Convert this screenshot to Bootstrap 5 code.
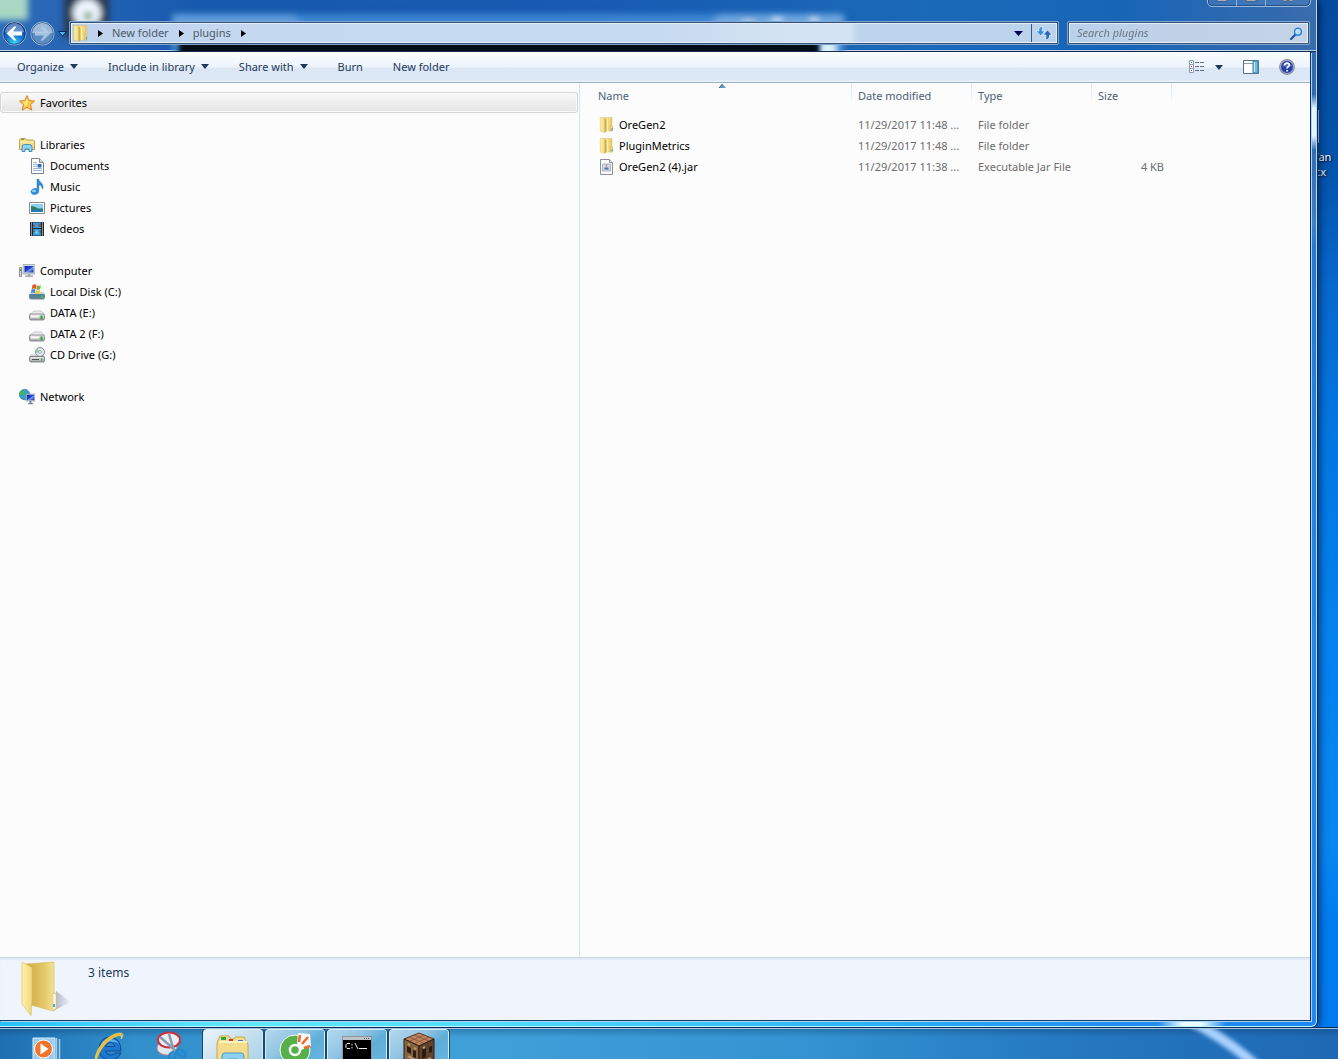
<!DOCTYPE html>
<html lang="en">
<head>
<meta charset="utf-8">
<meta name="viewport" content="width=device-width, initial-scale=1">
<title>plugins</title>
<link href="https://cdn.jsdelivr.net/npm/bootstrap@5.3.0/dist/css/bootstrap.min.css" rel="stylesheet">
<style>
  body { font-family: "Noto Sans", "Open Sans", sans-serif; font-size: 11px; line-height: 21px; color: #000; background: #0257b2; }
  button, input { font: inherit; }
  svg { display: block; flex: none; }
  a { color: inherit; text-decoration: none; }
  .plain-btn { background: none; border: 0; padding: 0; color: inherit; }
  .can-shrink { min-height: 0; }

  /* desktop */
  .desk { min-height: 0; padding-right: 20px; background: linear-gradient(180deg, #064ba0 0, #0453ab 16%, #0768cd 28%, #0377e2 42%, #0582f0 65%, #0a86f0 82%, #017cf0 90%, #017bef 100%); }
  .desk-file { left: calc(100% - 26px); top: 110px; width: 26px; height: 72px; color: #fff; line-height: 15px; text-shadow: 1px 1px 2px #000; overflow: hidden; padding-top: 39px; }
  .desk-file::before { content: ""; position: absolute; left: 5px; top: 0; width: 2px; height: 33px; background: #dcebf8; }

  /* window frame */
  .win { border-right: 1px solid #0b2f5c; border-bottom: 1px solid #07264f; border-radius: 0 0 7px 0; box-shadow: 1px 0 8px rgba(0,20,60,.8); position: relative; z-index: 1; }
  .frame { padding: 0 5px 5px 0; border-right: 1px solid #b5dcfa; border-bottom: 1px solid #c1f4ff; border-radius: 0 0 6px 0; min-height: 0;
    background:
      radial-gradient(ellipse 34px 8px at 1192px calc(100% - 2px), #e9ffff 30%, transparent),
      radial-gradient(ellipse 12px 28px at calc(100% - 2px) 122px, #e4f5ff 50%, transparent),
      linear-gradient(90deg, #27c0fd 0, #62e9ff 18%, #50dcff 38%, #2bb5fa 65%, #218cf0 85%, #1c88f0 100%) 0 100%/100% 8px no-repeat,
      linear-gradient(180deg, #386fb3 0, #2f66ad 12%, #3e7fc8 22%, #2779d2 24%, #2186e9 55%, #2089f2 100%); }
  .client { border-right: 1px solid #12305c; border-bottom: 1px solid #163b66; box-shadow: 1px 1px 0 #a5d4f5; background: #fcfcfc; min-height: 0; }

  /* glass header */
  .glass { height: 52px; margin-right: -5px; overflow: hidden; background: linear-gradient(90deg, #2f6cb8 0, #1759ae 15%, #175bb2 45%, #1b69b9 70%, #1765b7 85%, #3a6cad 100%); border-bottom: 1px solid #102b4d; box-shadow: inset 0 -1px 0 #bdd4ea; position: relative; }
  .glass-back { position: absolute; inset: 0; width: 100%; height: 100%; }
  .caption { position: absolute; right: 5px; top: -14px; height: 21px; width: 104px; border: 1px solid #9dbbdc; border-radius: 0 0 5px 5px; box-shadow: inset 0 0 0 1px #254f88; background: rgba(90,140,200,.35); overflow: hidden; }
  .caption button { display: flex; justify-content: center; align-items: end; border-right: 1px solid #8fb0d6; padding-bottom: 4px; width: 29px; }
  .caption button:last-child { border: 0; }
  .nav-line { position: relative; padding: 21px 6px 0 2px; }
  .nav-set { width: 67px; height: 25px; gap: 3px; }
  .glass-box { height: 24px; border: 1px solid rgba(145,180,220,.85); border-radius: 2px; padding: 1px; background: #33537a; min-width: 0; }
  .glass-in { border: 1px solid #e4eef8; background: linear-gradient(90deg, #bfd2ec 0, #c5d9f1 20%, #c6daf1 60%, #d5e4f2 74%, #d5e4f2 79%, #bdd4ec 80%, #bcd3ec 100%); min-width: 0; height: 20px; }
  .glass-in.search-in { background: linear-gradient(90deg, #bad1ea, #c5d3e6); }
  .address { color: #4c5a68; line-height: 18px; }
  .crumb-mark { margin: 0 9px 0 10px; }
  .crumb-first { margin-left: 8px; }
  .search-box { flex: 0 0 243px; }
  .search-box input { background: none; border: 0; outline: 0; font-style: italic; padding: 0 7px; min-width: 0; line-height: 16px; }
  .search-box input::placeholder { color: #6d7780; opacity: 1; }
  .go { width: 25px; border-left: 1px solid #37597f; }

  /* command bar */
  .cmdbar { height: 31px; padding: 0 15px 0 2px; color: #1e395b; background: linear-gradient(180deg, #fafdff 0, #ecf4fc 15px, #dce6f4 16px, #dde8f6 28px, #e9f1fb 29px); border-bottom: 1px solid #9db0cb; }
  .cmdbar .plain-btn { padding: 0 15px 1px; line-height: 28px; display: flex; align-items: center; gap: 6px; }

  /* tree */
  .tree { flex: 0 0 580px; border-right: 1px solid #d6e5f5; padding: 9px 1px 0 0; }
  .tree ul { list-style: none; margin: 0 0 21px; padding: 0; }
  .tree a { display: flex; align-items: center; gap: 5px; height: 21px; padding-left: 29px; }
  .tree a.top { padding-left: 19px; }
  .tree a.picked { border: 1px solid #d6d6d6; border-radius: 3px; padding-left: 18px; background: linear-gradient(#f9f9f9, #e4e4e4); box-shadow: inset 0 0 0 1px #fafafa; }

  /* list */
  .files { table-layout: fixed; width: 592px; border-collapse: separate; border-spacing: 0; color: #6d6d6d; }
  .files th { height: 31px; padding: 2px 6px 0; vertical-align: top; font-weight: 400; color: #4c607a; position: relative; background: linear-gradient(180deg, #d9e8f8, #e3effb 60%, #fcfcfc) 100% 0/1px 20px no-repeat; }
  .files td { height: 21px; padding: 0 6px; white-space: nowrap; }
  .files th:first-child { padding-left: 18px; }
  .files td:first-child { padding-left: 19px; color: #000; }
  .files td:last-child { padding-right: 8px; text-align: right; }
  .fname { display: flex; align-items: center; gap: 4px; }
  .sort-mark { position: absolute; left: 51%; top: 1px; }

  .details { height: 63px; background: #f0f4fc; border-top: 1px solid #c6d7e8; box-shadow: inset 0 2px 1px #e2eaf6; color: #1e395b; font-size: 12px; padding: 3px 0 0 19px; gap: 19px; line-height: 24px; }

  /* taskbar */
  .taskbar { height: 31px; border-top: 1px solid #a4c4e2; overflow: hidden; padding-left: 16px; position: relative; z-index: 2; box-shadow: 0 -1px 0 #0b2c54;
    background: linear-gradient(180deg, rgba(10,60,110,.35), transparent 8px),
      linear-gradient(90deg, #1d6fb2 0, #318fca 10%, #40a0d8 35%, #3493d2 60%, #2478c0 80%, #1f68b4 100%); }
  .taskbar .plain-btn { width: 62px; height: 40px; flex: none; display: flex; justify-content: center; padding-top: 2px; }
  .taskbar .running { width: 60px; margin: 0 1px; border: 1px solid #d5ecf9; border-radius: 3px; background: linear-gradient(140deg, #b5d8ec 0, #8fc4e2 38%, #5eaed9 60%, #6bb7df 100%); outline: 1px solid #17496f; }
  .taskbar .front { background: linear-gradient(140deg, #eaf4fa 0, #c9e1ef 45%, #a4d0e9 100%); }
  .beam { position: absolute; left: 1180px; top: 0; }
</style>
<script src="https://cdn.jsdelivr.net/npm/bootstrap@5.3.0/dist/js/bootstrap.bundle.min.js"></script>
</head>
<body class="vh-100 d-flex flex-column overflow-hidden">

<svg width="0" height="0" class="position-absolute" aria-hidden="true">
  <defs>
    <linearGradient id="gold" x1="0" x2="1"><stop offset="0" stop-color="#fdf3a9"/><stop offset="1" stop-color="#e8c864"/></linearGradient>
    <linearGradient id="goldIn" x1="0" x2="1"><stop offset="0" stop-color="#cfa743"/><stop offset=".6" stop-color="#e3c766"/><stop offset="1" stop-color="#f7e69a"/></linearGradient>
    <linearGradient id="goldFlap" x1="0" x2="1"><stop offset="0" stop-color="#fff3a6"/><stop offset="1" stop-color="#f0d780"/></linearGradient>
    <linearGradient id="screen" x1="0" y1="0" x2="1" y2="1"><stop offset="0" stop-color="#0a1fa8"/><stop offset=".5" stop-color="#2446d8"/><stop offset=".55" stop-color="#7fa2f2"/><stop offset="1" stop-color="#0c22b0"/></linearGradient>
    <linearGradient id="metal" x1="0" y1="0" x2="0" y2="1"><stop offset="0" stop-color="#f1f1f3"/><stop offset="1" stop-color="#9fa1a8"/></linearGradient>
    <radialGradient id="ball" cx=".5" cy=".95" r=".9"><stop offset="0" stop-color="#3fe0ff"/><stop offset=".45" stop-color="#1673d0"/><stop offset="1" stop-color="#0a3a94"/></radialGradient>
    <linearGradient id="lens" x1="0" y1="0" x2="1" y2="1"><stop offset="0" stop-color="#e6f5ff"/><stop offset="1" stop-color="#8fc2ee"/></linearGradient>
    <symbol id="i-folder" viewBox="0 0 16 16">
      <path d="M5 .5h8v13.500H5z" fill="url(#gold)" stroke="#dcc069" stroke-width=".5"/>
      <path d="M1.300.5h4.200l.5 15-4.700-1.500z" fill="url(#goldFlap)" stroke="#d9bd60" stroke-width=".5"/>
      <path d="M5.800 1l1.700 1.500V14l-1.700 1.500z" fill="#c09a3c" opacity=".75"/>
      <path d="M8 2h1v12H8z" fill="#fff3ae"/>
      <path d="M11.500 8.500l2 .5v5h-2z" fill="#f4e08e" stroke="#cfab4c" stroke-width=".5"/><path d="M12.500 11h1v2.500h-1z" fill="#3aa0e0"/>
    </symbol>
    <symbol id="i-drive" viewBox="0 0 16 16">
      <path d="M3 6.500L5 5h7l2 1.500 1.500 2h-15z" fill="#ededf0" stroke="#b0b0b5" stroke-width=".6"/>
      <rect x=".5" y="8" width="15" height="6" rx="1.500" fill="url(#metal)" stroke="#77797f" stroke-width=".8"/>
      <rect x="2" y="9.500" width="8" height="2" fill="#f7f7f8"/><rect x="11.500" y="9.500" width="2" height="3.500" fill="#2da52d"/>
    </symbol>
  </defs>
</svg>

<main class="desk flex-grow-1 position-relative d-flex flex-column">
  <div class="desk-file position-absolute">Van<br>&nbsp;cx</div>

  <div class="win can-shrink flex-grow-1 d-flex flex-column">
    <div class="frame flex-grow-1 d-flex flex-column">

      <header class="glass flex-shrink-0">
        <svg class="glass-back" aria-hidden="true">
          <defs>
            <filter id="soft" x="-20%" y="-50%" width="140%" height="200%"><feGaussianBlur stdDeviation="3"/></filter>
            <filter id="edge" x="-5%" y="-50%" width="110%" height="200%"><feGaussianBlur stdDeviation="2 0"/></filter>
          </defs>
          <g filter="url(#soft)">
            <rect x="-10" y="-10" width="38" height="30" fill="#a9d7c4"/>
            <rect x="64" y="-8" width="45" height="46" fill="#26384f"/>
            <ellipse cx="87" cy="13" rx="14" ry="14" fill="#eef6ff"/><circle cx="88" cy="16" r="4" fill="#5a8b55"/>
            <rect x="172" y="14" width="672" height="44" rx="4" fill="#4a93dc" opacity=".75"/>
            <path d="M172 14h120l30 30H172z" fill="#7fb4e8" opacity=".5"/>
            <path d="M720 14h124v30H690z" fill="#8fbbe6" opacity=".6"/>
            <ellipse cx="748" cy="22" rx="6" ry="2" fill="#d5e8f8"/><ellipse cx="777" cy="20" rx="6" ry="3" fill="#d5e8f8"/><ellipse cx="814" cy="20" rx="5" ry="3" fill="#d5e8f8"/>
            <rect x="820" y="42" width="16" height="14" fill="#dff5ff"/>
          </g>
          <rect x="179" y="44" width="640" height="8" fill="#050b12" filter="url(#edge)"/>
          <path d="M200 50h80M310 50h20M440 50h25M492 50h20" stroke="#0a2414" stroke-width="3" filter="url(#edge)"/>
        </svg>
        <div class="caption d-flex">
          <button class="plain-btn" aria-label="Minimize"><svg width="12" height="4"><path d="M1 0h10v3H1z" fill="#fff" stroke="#4a5b73"/></svg></button>
          <button class="plain-btn" aria-label="Maximize"><svg width="12" height="4"><path d="M1 0h10v3H1z" fill="#fff" stroke="#4a5b73"/></svg></button>
          <button class="plain-btn flex-grow-1" aria-label="Close"><svg width="12" height="4"><path d="M1 0h4v3H1zM7 0h4v3H7z" fill="#fff" stroke="#4a5b73"/></svg></button>
        </div>

        <div class="nav-line d-flex">
          <div class="nav-set d-flex align-items-center flex-shrink-0">
            <button class="plain-btn" aria-label="Back"><svg width="25" height="25" viewBox="0 0 25 25"><circle cx="12.500" cy="12.500" r="11.500" fill="url(#ball)" stroke="#9cc0e2"/><circle cx="12.500" cy="12.500" r="10.800" fill="none" stroke="#0d2c66" stroke-width=".8"/><path d="M3 11C4 4.500 9 2 12.500 2S21 4.500 22 11C16 13 9 13 3 11z" fill="#fff" opacity=".35"/><path d="M4.500 12.500L12 5.500h2.500L11 10.500h9v4h-9l3.500 5H12z" fill="#fff"/></svg></button>
            <button class="plain-btn" aria-label="Forward"><svg width="25" height="25" viewBox="0 0 25 25"><circle cx="12.500" cy="12.500" r="11.500" fill="#5c8cc4" stroke="#a9c8e6"/><circle cx="12.500" cy="12.500" r="10.800" fill="none" stroke="#3c557c" stroke-width=".8"/><path d="M2 12C3 4.500 9 2 12.500 2S22 4.500 23 12z" fill="#fff" opacity=".4"/><path d="M20.500 12.500L13 5.500h-2.500l3.500 5H5v4h9l-3.500 5H13z" fill="#b9cfe8" opacity=".8"/></svg></button>
            <button class="plain-btn" aria-label="Recent pages"><svg width="9" height="6"><path d="M.5.5h8L4.500 5z" fill="#43bdf0" stroke="#082b5c"/></svg></button>
          </div>
          <div class="glass-box flex-grow-1 me-1">
            <div class="glass-in address d-flex align-items-center">
              <svg width="18" height="17"><use href="#i-folder"/></svg>
              <svg class="crumb-mark crumb-first" width="5" height="7"><path d="M0 0l5 3.500L0 7z"/></svg>
              <a href="#">New folder</a>
              <svg class="crumb-mark" width="5" height="7"><path d="M0 0l5 3.500L0 7z"/></svg>
              <a href="#">plugins</a>
              <svg class="crumb-mark" width="5" height="7"><path d="M0 0l5 3.500L0 7z"/></svg>
              <button class="plain-btn ms-auto pe-1 me-1" aria-label="Previous locations"><svg width="9" height="5"><path d="M0 0h9L4.500 5z" fill="#00005c"/></svg></button>
              <button class="plain-btn go h-100 d-flex align-items-center justify-content-center flex-shrink-0" aria-label="Refresh"><svg width="16" height="14" viewBox="0 0 16 14"><path d="M7 .5C3.500.5 2.800 2.500 2.800 5H0l4.700 5L9 5H6.200c0-2 0-3 .8-4.500z" fill="#3a8fdc" stroke="#fff" stroke-width=".6"/><path d="M9.500 13.500c3.500 0 4-2 4-4.500h2.500L11.500 4 7 9h3c0 2 0 3-.5 4.500z" fill="#2467bd" stroke="#fff" stroke-width=".6"/></svg></button>
            </div>
          </div>
          <div class="glass-box search-box ms-1 me-0">
            <div class="glass-in search-in d-flex align-items-center">
              <input type="search" class="flex-grow-1" placeholder="Search plugins" aria-label="Search plugins">
              <button class="plain-btn me-1" aria-label="Search"><svg width="13" height="13" viewBox="0 0 13 13"><path d="M1 12l5-5" stroke="#1f4f9c" stroke-width="2" stroke-linecap="round"/><circle cx="8" cy="4.700" r="3.500" fill="url(#lens)" stroke="#2f83cf" stroke-width="1.500"/></svg></button>
            </div>
          </div>
        </div>
      </header>

      <div class="client flex-grow-1 d-flex flex-column">
        <nav class="cmdbar flex-shrink-0 d-flex align-items-center">
          <button class="plain-btn">Organize <svg width="8" height="5"><path d="M0 0h8L4 5z" fill="#1e395b"/></svg></button>
          <button class="plain-btn">Include in library <svg width="8" height="5"><path d="M0 0h8L4 5z" fill="#1e395b"/></svg></button>
          <button class="plain-btn">Share with <svg width="8" height="5"><path d="M0 0h8L4 5z" fill="#1e395b"/></svg></button>
          <button class="plain-btn">Burn</button>
          <button class="plain-btn">New folder</button>
          <button class="plain-btn ms-auto p-0" aria-label="Change view">
            <svg class="me-1" width="16" height="14" viewBox="0 0 16 14"><g fill="#fff" stroke="#8a9cb5"><path d="M.5.5h4v4h-4zM.5 4.500h4v4h-4zM.5 8.500h4v4h-4z"/></g><path d="M2 2h1v1H2z" fill="#2f9640"/><path d="M2 6h1v1H2z" fill="#e02020"/><path d="M2 10h1v1H2z" fill="#2060d0"/><path d="M6 2.500h4m1 0h4M6 6.500h4m1 0h4M6 10.500h4m1 0h4" stroke="#5c6f8c"/></svg>
            <svg width="8" height="5"><path d="M0 0h8L4 5z" fill="#1e395b"/></svg></button>
          <button class="plain-btn p-0 ms-3" aria-label="Show the preview pane"><svg class="ms-1" width="16" height="14"><path d="M.5.5h15v13H.5z" fill="#fff" stroke="#5a7290"/><path d="M1 3.500h9" stroke="#8a9cb5"/><path d="M10 1h5v12h-5z" fill="#6fbbdc" stroke="#3f82a8"/><path d="M11 2h1v10h-1z" fill="#c8ecf8"/></svg></button>
          <button class="plain-btn p-0 ms-3" aria-label="Get help"><svg class="ms-1" width="16" height="16" viewBox="0 0 16 16"><circle cx="8" cy="8" r="7.300" fill="#2540a8" stroke="#8f8f94" stroke-width="1.200"/><circle cx="8" cy="8" r="6.400" fill="none" stroke="#dcdce4" stroke-width=".7"/><path d="M3 7c1-4 9-4 10 0-3 1-7 1-10 0z" fill="#7f98e0" opacity=".6"/><path d="M5.700 6.300C5.700 3.400 10.300 3.400 10.300 6 10.300 7.600 8 7.700 8 9.500M8 11v1.500" stroke="#fff" stroke-width="1.700" fill="none"/></svg></button>
        </nav>

        <div class="can-shrink flex-grow-1 d-flex">
          <aside class="tree">
            <ul>
              <li><a href="#" class="top picked"><svg width="16" height="16" viewBox="0 0 16 16"><path d="M8 .6l2.200 5 5.300.5-4 3.600 1.300 5.500L8 12.300l-4.800 2.900 1.300-5.500-4-3.600 5.300-.5z" fill="#ffc93c" stroke="#d9822b"/><path d="M8 3l1.300 3.600L8 10 5 12l1-3-2.500-2.200L6.600 6.500z" fill="#fff0a0" opacity=".8"/></svg>Favorites</a></li>
            </ul>
            <ul>
              <li><a href="#" class="top"><svg width="16" height="16" viewBox="0 0 16 16"><path d="M.5 12.500v-10l1-1h5l1 1.500h7l1 1v8.500z" fill="#f3dd86" stroke="#c2a24c"/><path d="M2 2h3v1H2z" fill="#4caf50"/><path d="M1 5h14" stroke="#fff5c4"/><path d="M3 14.500V10q0-2.500 2.500-2.500h5Q13 7.500 13 10v4.500h-3V12H6v2.500z" fill="#8ed2f3" stroke="#3688bf" stroke-width=".9"/></svg>Libraries</a></li>
              <li><a href="#"><svg width="16" height="16" viewBox="0 0 16 16"><path d="M2.500.5h8l4 4v11h-12z" fill="#fff" stroke="#80868e"/><path d="M10.500.5v4h4" fill="#dde3ea" stroke="#80868e"/><path d="M4 4.500h4M4 6.500h4M4 8.500h4M4 10.500h9M4 12.500h9" stroke="#9fb4cf"/><path d="M8.500 6h4v3.500h-4z" fill="#2d6cc0"/></svg>Documents</a></li>
              <li><a href="#"><svg width="16" height="16" viewBox="0 0 16 16"><path d="M8 0h1.500c.5 3 5 4 4.500 9-.3 1-.8 1-1 0C13 6.500 11 6 9.800 6v6c0 2-2 3.500-4.500 3.500S2 14 2 12.500s2-3 4-3c.8 0 1.500.2 2 .4z" fill="#2b8fd9" stroke="#1c6cae" stroke-width=".5"/><ellipse cx="5" cy="12" rx="2" ry="1.200" fill="#8ed4f8"/></svg>Music</a></li>
              <li><a href="#"><svg width="16" height="16" viewBox="0 0 16 16"><path d="M.5 2.500h15v11H.5z" fill="#fff" stroke="#85888c"/><path d="M2 4h12v8H2z" fill="#8ecdf2"/><path d="M2 6q4 0 7 2.500h5V10H2z" fill="#2e7d5c"/><path d="M2 9.500h12V12H2z" fill="#2679bb"/></svg>Pictures</a></li>
              <li><a href="#"><svg width="16" height="16" viewBox="0 0 16 16"><path d="M1 1h14v14H1z" fill="#202830"/><path d="M4 1.500h8V7H4zM4 8h8v6.500H4z" fill="#3f97dc"/><path d="M4 3l2 1-1 2H4zM9 4l3-2v4h-2zM4 9l2 1-2 2zM10 10l2-1v4z" fill="#7c5b48"/><path d="M5 12l3-3 2 4z" fill="#64d1f5"/><path d="M2.500 1.500v13M13.500 1.500v13" stroke="#fff" stroke-dasharray="1 1"/></svg>Videos</a></li>
            </ul>
            <ul>
              <li><a href="#" class="top"><svg width="16" height="16" viewBox="0 0 16 16"><path d="M.5 4.500h2v9h-2z" fill="#d5d8dd" stroke="#8b9097"/><path d="M1 6h1v2H1z" fill="#3bb53b"/><path d="M4 1.500h12v9.500H4z" fill="#d4d7de" stroke="#8b9097" stroke-width=".6"/><path d="M5.500 3h9v6.500h-9z" fill="url(#screen)"/><path d="M8.500 11h3v1.500H14V14H6v-1.500h2.500z" fill="#a9adb5"/></svg>Computer</a></li>
              <li><a href="#"><svg width="16" height="16" viewBox="0 0 16 16"><rect x=".5" y="9.500" width="15" height="5.500" rx="1.500" fill="#4e8296" stroke="#808890"/><path d="M2 8h12l1.500 2H.5z" fill="#c9d3da"/><path d="M12 11.500h2V14h-2z" fill="#41c841"/><path d="M3.500 1q2-1.500 4 0l-.7 4q-2-1-4.100 0z" fill="#e8572a"/><path d="M8 1.300q2 1 4 0l-.8 4q-2 1-4 0z" fill="#74bb3c"/><path d="M2.500 5.600q2-1 4 0L5.800 9q-2-1-4 0z" fill="#3c8ae0"/><path d="M7 6q2 1 4 0l-.8 3.500q-2 .8-4 0z" fill="#f9c32f"/></svg>Local Disk (C:)</a></li>
              <li><a href="#"><svg width="16" height="16"><use href="#i-drive" y="1"/></svg>DATA (E:)</a></li>
              <li><a href="#"><svg width="16" height="16"><use href="#i-drive" y="1"/></svg>DATA 2 (F:)</a></li>
              <li><a href="#"><svg width="16" height="16" viewBox="0 0 16 16"><path d="M2 8h12l1.500 2H.5z" fill="#e2e2e5" stroke="#999" stroke-width=".5"/><circle cx="11" cy="5" r="4.500" fill="#dfe6ea" stroke="#8b8f95"/><path d="M11 5L8 1.800A4.500 4.500 0 0 0 6.800 6z" fill="#8fd49a"/><circle cx="11" cy="5" r="1.300" fill="#fff" stroke="#8b8f95" stroke-width=".7"/><rect x=".5" y="9.500" width="15" height="5.500" rx="1.500" fill="url(#metal)" stroke="#6d6f75" stroke-width=".8"/><path d="M3 12.500h7" stroke="#555"/><path d="M12 11.500h1.500v2H12z" fill="#2da52d"/></svg>CD Drive (G:)</a></li>
            </ul>
            <ul>
              <li><a href="#" class="top"><svg width="16" height="16" viewBox="0 0 16 16"><circle cx="5.500" cy="5.500" r="5.200" fill="#3b9ade" stroke="#2a6fa8" stroke-width=".6"/><path d="M1 3q2-3 5-2.500L5 3l2 1-3 3-3-1zM5 8l3-1 1 2-3 1.500z" fill="#3fb55c"/><path d="M7 5h9v7H7z" fill="#ccd0d8" stroke="#888e98" stroke-width=".5"/><path d="M7.800 5.800h7.500v5.400H7.800z" fill="url(#screen)"/><path d="M10.500 12h2v2H14v1.200H9V14h1.500z" fill="#7d848f"/></svg>Network</a></li>
            </ul>
          </aside>

          <section class="flex-grow-1">
            <table class="files">
              <colgroup><col style="width:272px"><col style="width:120px"><col style="width:120px"><col style="width:80px"></colgroup>
              <thead><tr>
                <th scope="col">Name<svg class="sort-mark" width="7" height="4"><path d="M0 4h7L3.500 0z" fill="#5b9cc0"/><path d="M0 4L3.500 0" stroke="#2c5878"/></svg></th>
                <th scope="col">Date modified</th><th scope="col">Type</th><th scope="col">Size</th>
              </tr></thead>
              <tbody>
                <tr><td><div class="fname"><svg width="16" height="16"><use href="#i-folder"/></svg>OreGen2</div></td><td>11/29/2017 11:48 ...</td><td>File folder</td><td></td></tr>
                <tr><td><div class="fname"><svg width="16" height="16"><use href="#i-folder"/></svg>PluginMetrics</div></td><td>11/29/2017 11:48 ...</td><td>File folder</td><td></td></tr>
                <tr><td><div class="fname"><svg width="16" height="16" viewBox="0 0 16 16"><path d="M1.500.5h9l3 3v12h-12z" fill="#fbfbfb" stroke="#8d9196"/><path d="M10.500.5v3h3" fill="#dfe3e8" stroke="#8d9196"/><path d="M3.500 5h8v7h-8z" fill="#cfdae6" stroke="#8fa0b3" stroke-width=".7"/><path d="M5.500 8.500h4v2h-4z" fill="#4d7396"/><path d="M8 5.500L7 8" stroke="#d9803c"/></svg>OreGen2 (4).jar</div></td><td>11/29/2017 11:38 ...</td><td>Executable Jar File</td><td>4 KB</td></tr>
              </tbody>
            </table>
          </section>
        </div>

        <footer class="details flex-shrink-0 d-flex">
          <svg width="50" height="56" viewBox="0 0 50 56" aria-hidden="true"><defs><linearGradient id="shade" x1="0" x2="1"><stop offset="0" stop-color="#7d8594" stop-opacity=".6"/><stop offset="1" stop-color="#7d8594" stop-opacity="0"/></linearGradient></defs><path d="M34 50L52 41 37 30z" fill="url(#shade)"/><path d="M6 3l29-2v31l2 1v15l-3 2-22-6z" fill="url(#goldIn)" stroke="#d9bd67" stroke-width=".7"/><path d="M34 32l3 1v14l-3 2z" fill="#fff" stroke="#d9bd67" stroke-width=".6"/><path d="M34 43h2v3h-2z" fill="#55a2e6"/><path d="M3 1l10 5.500V36l-1 18.500L3 43z" fill="url(#goldFlap)" stroke="#dcc069" stroke-width=".7"/></svg>
          <div>3 items</div>
        </footer>
      </div>
    </div>
  </div>
</main>

<nav class="taskbar d-flex flex-shrink-0" aria-label="Taskbar">
  <svg class="beam" width="110" height="34" aria-hidden="true"><defs><filter id="glow"><feGaussianBlur stdDeviation="2"/></filter></defs><path d="M6-10Q45 8 80 40" fill="none" stroke="#a9d2ff" stroke-width="10" filter="url(#glow)"/></svg>
  <button class="plain-btn" aria-label="Media Player"><svg width="32" height="40" viewBox="0 0 32 40"><path d="M2 7h22v26H2z" fill="#9ccdee" stroke="#d6edfa"/><path d="M25.500 7v26M28.500 8v24" stroke="#a5d0ea" stroke-width="1.500"/><circle cx="12.500" cy="18" r="9" fill="#f0752a" stroke="#fff"/><path d="M9.500 12.500v11l8-5.500z" fill="#fff"/></svg></button>
  <button class="plain-btn" aria-label="Internet Explorer"><svg width="32" height="36" viewBox="0 0 32 36"><path d="M28 20H12.500q1 4 5 4 3 0 4.500-2h6Q25 29 17 29 6 28 6 18 7 6 17 6q11 1 11 14zM12.500 15.500H22q-.7-4-4.500-4t-5 4z" fill="#1d78cf" stroke="#0d4b94"/><path d="M8 12Q17 4 26 12q-8-3-18 0z" fill="#8ddcff" opacity=".6"/><path d="M3 31C-1 24 12 3 27 2c4 0 3 4 1 6 1-3 0-4-2-3.500C15 7 5 20 3 31z" fill="#f5b921" stroke="#fbe27a" stroke-width=".6"/></svg></button>
  <button class="plain-btn" aria-label="Snipping Tool"><svg width="32" height="34" viewBox="0 0 32 34"><ellipse cx="12" cy="17" rx="10" ry="7" fill="#dfe6ee" stroke="#d5828b"/><ellipse cx="14" cy="9" rx="11" ry="7.500" fill="#e9edf4" stroke="#cf3038" stroke-width="2"/><path d="M5 6l17 15M14 3l5 17" stroke="#8c9ab0" stroke-width="2.500"/><ellipse cx="17" cy="26" rx="3" ry="5" transform="rotate(20 17 26)" fill="none" stroke="#2487cf" stroke-width="2.500"/><ellipse cx="26" cy="22" rx="5" ry="2.500" transform="rotate(30 26 22)" fill="none" stroke="#2487cf" stroke-width="2.500"/></svg></button>
  <button class="plain-btn running front" aria-label="Explorer"><svg width="34" height="38" viewBox="0 0 34 38"><path d="M2 8l2-4h9l2 3h3l1-2h9l2 4 2 3v26H1V12z" fill="#f4dc8d" stroke="#c9a553"/><path d="M5 5h5v3H5z" fill="#30a440"/><path d="M13 7h4v3h-4z" fill="#d13a3a"/><path d="M22 8h5v3h-5z" fill="#3a78d1"/><path d="M3 10h28" stroke="#fff3bf" stroke-width="2"/><path d="M6 36V24q0-3 3-3h16q3 0 3 3v12h-6v-9H12v9z" fill="#8fd0ee" stroke="#4a9cc4"/></svg></button>
  <button class="plain-btn running" aria-label="Browser"><svg width="34" height="36" viewBox="0 0 34 36"><circle cx="17" cy="18" r="15" fill="#58b04b" stroke="#fff"/><path d="M19 13L20 1l12 1 1 12-10 4z" fill="#f7fbfc"/><path d="M21 10l1-7M24 12l6-7M26 16l6-2" stroke="#ef6b2c" stroke-width="2.500"/><circle cx="17" cy="18" r="5" fill="#58b04b" stroke="#fff" stroke-width="2.500"/></svg></button>
  <button class="plain-btn running" aria-label="Command Prompt"><svg width="32" height="36" viewBox="0 0 32 36"><path d="M1.500 4.500h29v31h-29z" fill="#000" stroke="#8f969d"/><path d="M2 5h28v3H2z" fill="#bcc2c8"/><path d="M23 6.500h6" stroke="#5a6168" stroke-dasharray="1 1"/><path d="M9 11.500H6l-1 1v3l1 1h3M11 12v1.500M11 15v1.500M14 11l3 6M18 16.500h8" stroke="#eee" fill="none"/></svg></button>
  <button class="plain-btn running" aria-label="Minecraft"><svg width="32" height="36" viewBox="0 0 32 36"><path d="M16 1l15 6-15 7L1 7z" fill="#c08560" stroke="#5a3826"/><path d="M6 5l15 6.500M11 3l15 6M21 3L6 9.500M26 5l-15 7" stroke="#8d5a3c"/><path d="M1 7l15 7v21L1 29z" fill="#86633f" stroke="#2e1d13"/><path d="M31 7l-15 7v21l15-7z" fill="#5f432b" stroke="#2e1d13"/><path d="M4 14l4 2v6l-4-2zM10 18l3 1v7l-3-1zM19 18l4-2v9l-4 2zM26 15l3-1v6l-3 1z" fill="#2b1b12"/><path d="M5 12l2 1M11 16l2 1M20 16l2-1M5 24l7 4M20 30l8-4" stroke="#b39a78" stroke-width="2"/></svg></button>
</nav>
</body>
</html>
